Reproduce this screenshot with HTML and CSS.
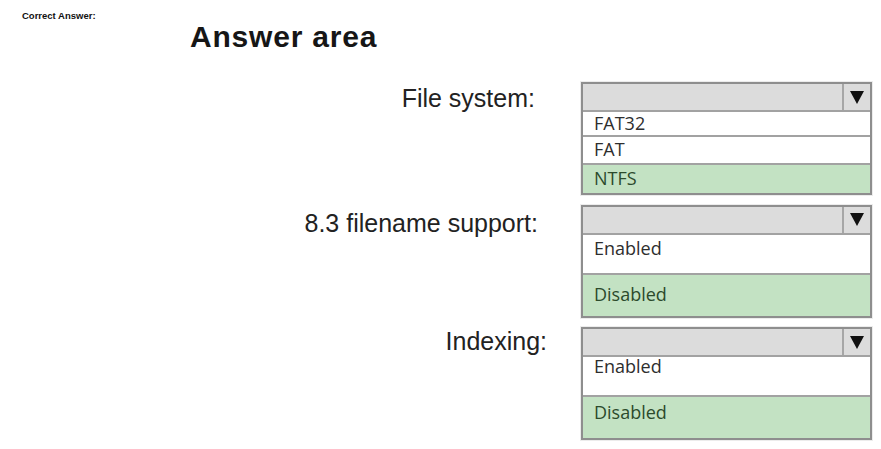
FILE: index.html
```html
<!DOCTYPE html>
<html lang="en">
<head>
<meta charset="utf-8">
<title>Answer area</title>
<link rel="stylesheet" href="styles.css">
</head>
<body>
<div class="page">
  <div class="correct">Correct Answer:</div>
  <h1 class="title">Answer area</h1>
  <div class="rows">
    <div class="row">
      <div class="label label-1">File system:</div>
      <div class="box">
        <div class="head"><div class="arrow"><svg width="14" height="13" viewBox="0 0 14 13"><polygon points="0,0 14,0 7,13" fill="#111"/></svg></div></div>
        <div class="opt h25 p0">FAT32</div>
        <div class="opt h28 p1">FAT</div>
        <div class="opt h30 p2 sel">NTFS</div>
      </div>
    </div>
    <div class="row">
      <div class="label label-2">8.3 filename support:</div>
      <div class="box">
        <div class="head"><div class="arrow"><svg width="14" height="13" viewBox="0 0 14 13"><polygon points="0,0 14,0 7,13" fill="#111"/></svg></div></div>
        <div class="opt h40 p2">Enabled</div>
        <div class="opt h43 p8 sel">Disabled</div>
      </div>
    </div>
    <div class="row">
      <div class="label label-3">Indexing:</div>
      <div class="box">
        <div class="head"><div class="arrow"><svg width="14" height="13" viewBox="0 0 14 13"><polygon points="0,0 14,0 7,13" fill="#111"/></svg></div></div>
        <div class="opt h40 tight">Enabled</div>
        <div class="opt h43 p4 sel">Disabled</div>
      </div>
    </div>
  </div>
</div>
</body>
</html>
```
FILE: styles.css
```css
* { box-sizing: border-box; }
html, body { margin: 0; padding: 0; background: #fff; }
.page {
  width: 881px;
  height: 449px;
  padding-top: 10px;
  font-family: "Liberation Sans", Arial, sans-serif;
  color: #1e1e1e;
}
.correct {
  padding-left: 22px;
  font-size: 9.5px;
  line-height: 11px;
  font-weight: bold;
  color: #111;
}
.title {
  margin: 0 0 0 190px;
  font-size: 30px;
  line-height: 32px;
  letter-spacing: 0.8px;
  font-weight: bold;
  color: #161616;
}
.rows {
  margin-top: 29px;
  display: flex;
  flex-direction: column;
  gap: 9.5px;
}
.row {
  display: flex;
  gap: 33px;
}
.label {
  width: 548px;
  text-align: right;
  font-size: 25px;
  line-height: 28px;
  color: #222;
}
.label-1 { padding-right: 13px; padding-top: 2px; }
.label-2 { padding-right: 10px; padding-top: 4px; }
.label-3 { padding-right: 1px; padding-top: 0; }
.box {
  width: 291px;
  border: 2px solid #8e8e8e;
  box-shadow: 0 0 0 1px #ececec;
  background: #fff;
  font-family: "Open Sans", "Noto Sans", sans-serif;
  font-size: 18px;
  color: #2e2e2e;
}
.head {
  height: 26px;
  background: #dcdcdc;
  display: flex;
  justify-content: flex-end;
}
.arrow {
  width: 28px;
  border-left: 2px solid #a6a6a6;
  display: flex;
  align-items: center;
  justify-content: center;
}
.arrow svg { display: block; }
.opt {
  border-top: 2px solid #a2a2a2;
  padding-left: 11px;
  line-height: 22px;
}
.sel { background: #c3e2c3; color: #2c4a2c; }
.h25 { height: 25px; }
.h28 { height: 28px; }
.h30 { height: 30px; }
.h40 { height: 40px; }
.h43 { height: 43px; }
.p0 { padding-top: 0; }
.p1 { padding-top: 1px; }
.p2 { padding-top: 2px; }
.p4 { padding-top: 4px; }
.p8 { padding-top: 8px; }
.tight { line-height: 18px; }
```
